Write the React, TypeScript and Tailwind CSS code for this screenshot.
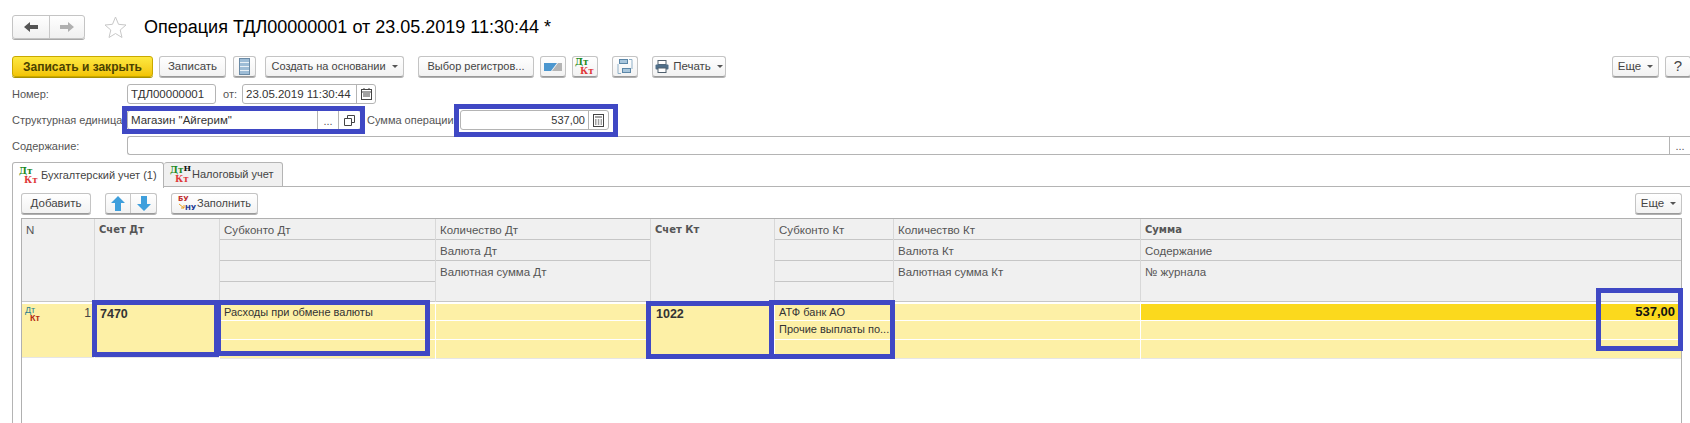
import React from 'react';

const btn =
  'flex items-center justify-center h-[21px] rounded-[3px] border border-[#c4c4c4] border-b-[#9a9a9a] bg-gradient-to-b from-white to-[#f2f2f2] shadow-[0_1px_0_#b0b0b0] text-[11.5px] text-[#444444] whitespace-nowrap';

const Caret = () => <span className="ml-[6px] w-0 h-0 border-x-[3px] border-x-transparent border-t-[3px] border-t-[#555555]" />;

// маленький значок Дт/Кт
const DtKt = ({ extra }: { extra?: string }) => (
  <span className="inline-flex flex-col shrink-0 w-[20px] font-bold text-[9px] leading-[9px] font-['DejaVu_Serif',serif]">
    <span className="text-[#1c8a1c]">
      Дт{extra && <span className="text-[#111111] text-[8px] relative -top-[2px]">{extra}</span>}
    </span>
    <span className="text-[#e0393a] ml-[5px]">Кт</span>
  </span>
);

const Field = ({ className, children }: { className: string; children?: React.ReactNode }) => (
  <div className={`flex items-stretch rounded-[3px] border border-[#b4b4b4] bg-white text-[11.5px] text-[#333333] whitespace-nowrap ${className}`}>{children}</div>
);

const Label = ({ className, children }: { className: string; children: React.ReactNode }) => (
  <span className={`pt-[1px] text-[11px] text-[#555555] whitespace-nowrap ${className}`}>{children}</span>
);

const Dots = () => (
  <span className="w-[21px] border-l border-[#b4b4b4] flex items-end justify-center pb-[1px] text-[11px] leading-[14px] text-[#555555]">...</span>
);

const Arrow = ({ dir, color }: { dir: 'left' | 'right'; color: string }) => (
  <svg width="14" height="10" viewBox="0 0 14 10">
    <path d={dir === 'left' ? 'M0 5 L6 0 V3 H14 V7 H6 V10 Z' : 'M14 5 L8 0 V3 H0 V7 H8 V10 Z'} fill={color} />
  </svg>
);

const BlueArrow = ({ up }: { up?: boolean }) => (
  <svg width="14" height="15" viewBox="0 0 14 15">
    <path d={up ? 'M7 0 L14 7 H10 V15 H4 V7 H0 Z' : 'M7 15 L14 8 H10 V0 H4 V8 H0 Z'} fill="#3f9fdc" />
  </svg>
);

const Box = ({ className }: { className: string }) => (
  <div className={`absolute border-[5px] border-[#3f48c4] pointer-events-none ${className}`} />
);

const HeadCell = ({ className, bold, children }: { className: string; bold?: boolean; children?: React.ReactNode }) => (
  <div
    className={`bg-[#f0f0f0] border-b border-[#c6c6c6] px-[4px] pt-[3px] text-[#555555] whitespace-nowrap overflow-hidden ${bold ? "font-['DejaVu_Sans',sans-serif] font-bold text-[10px] leading-[15px]" : 'text-[11.5px]'} ${className}`}
  >
    {children}
  </div>
);

type Col = {
  width: string;
  head: string[];
  heights: string[];
  bold?: boolean;
  rows: string[];
};

const columns: Col[] = [
  { width: 'w-[72px]', head: ['N'], heights: ['h-[83px]'], rows: [''] },
  { width: 'w-[125px]', head: ['Счет Дт'], heights: ['h-[83px]'], bold: true, rows: ['7470'] },
  { width: 'w-[216px]', head: ['Субконто Дт', '', '', ''], heights: ['h-[21px]', 'h-[21px]', 'h-[21px]', 'h-[20px]'], rows: ['Расходы при обмене валюты', '', ''] },
  { width: 'w-[215px]', head: ['Количество Дт', 'Валюта Дт', 'Валютная сумма Дт'], heights: ['h-[21px]', 'h-[21px]', 'h-[41px]'], rows: ['', '', ''] },
  { width: 'w-[124px]', head: ['Счет Кт'], heights: ['h-[83px]'], bold: true, rows: ['1022'] },
  { width: 'w-[119px]', head: ['Субконто Кт', '', '', ''], heights: ['h-[21px]', 'h-[21px]', 'h-[21px]', 'h-[20px]'], rows: ['АТФ банк АО', 'Прочие выплаты по...', ''] },
  { width: 'w-[247px]', head: ['Количество Кт', 'Валюта Кт', 'Валютная сумма Кт'], heights: ['h-[21px]', 'h-[21px]', 'h-[41px]'], rows: ['', '', ''] },
  { width: 'w-[541px]', head: ['Сумма', 'Содержание', '№ журнала'], heights: ['h-[21px]', 'h-[21px]', 'h-[41px]'], rows: [] },
];

export default function App() {
  return (
    <div className="relative w-[1690px] h-[423px] overflow-hidden bg-white font-['Liberation_Sans',sans-serif]">
      {/* шапка */}
      <div className="flex items-center h-[34px] pt-[10px] pl-[12px] box-content">
        <div className="flex h-[24px] w-[73px] rounded-[3px] border border-[#c4c4c4] bg-gradient-to-b from-white to-[#f0f0f0] shadow-[0_1px_0_#a8a8a8]">
          <span className="w-[37px] flex items-center justify-center border-r border-[#c8c8c8]"><Arrow dir="left" color="#555555" /></span>
          <span className="flex-1 flex items-center justify-center"><Arrow dir="right" color="#b0b0b0" /></span>
        </div>
        <svg className="ml-[19px]" width="23" height="22" viewBox="0 0 23 22">
          <path d="M11.5 1 L14.5 8.3 L22 9 L16.2 14 L18 21.5 L11.5 17.5 L5 21.5 L6.8 14 L1 9 L8.5 8.3 Z" fill="none" stroke="#c8c8c8" />
        </svg>
        <span className="ml-[17px] text-[18px] text-black whitespace-nowrap">Операция ТДЛ00000001 от 23.05.2019 11:30:44 *</span>
      </div>

      {/* панель команд */}
      <div className="flex items-center mt-[12px] pl-[12px] pr-0">
        <div className="flex items-center justify-center w-[141px] h-[21px] rounded-[3px] border border-[#c9a900] bg-gradient-to-b from-[#fde93e] to-[#f3c400] shadow-[0_1px_0_#a89000] text-[12px] font-bold text-[#4a4200] whitespace-nowrap">
          Записать и закрыть
        </div>
        <div className={`${btn} w-[67px] ml-[6px]`}>Записать</div>
        <div className={`${btn} w-[23px] ml-[7px]`}>
          <svg width="11" height="17" viewBox="0 0 11 17">
            <rect x="0.5" y="0.5" width="10" height="16" fill="#9dbcd6" stroke="#6b8ba6" />
            <path d="M1 4.5 H10 M1 8.5 H10 M1 12.5 H10" stroke="#e8f0f6" />
          </svg>
        </div>
        <div className={`${btn} w-[139px] ml-[9px] text-[11px]`}>Создать на основании<Caret /></div>
        <div className={`${btn} w-[116px] ml-[14px] text-[11px]`}>Выбор регистров...</div>
        <div className={`${btn} w-[26px] ml-[6px]`}>
          <svg width="18" height="8" viewBox="0 0 18 8">
            <path d="M0 0 H13 L7 8 H0 Z" fill="#4c97cf" />
            <path d="M14 0 H18 V8 H8 Z" fill="#b4b4b4" />
          </svg>
        </div>
        <div className={`${btn} w-[26px] ml-[6px]`}><DtKt /></div>
        <div className={`${btn} w-[26px] ml-[14px]`}>
          <svg width="16" height="17" viewBox="0 0 16 17">
            <rect x="2.5" y="1.5" width="8" height="4" fill="#a9c6dc" stroke="#5c87a8" />
            <rect x="5.5" y="10.5" width="8" height="4" fill="#a9c6dc" stroke="#5c87a8" />
            <path d="M1 6 V15.5 H4 M15 11 V1.5 H12" fill="none" stroke="#8fb0c8" />
          </svg>
        </div>
        <div className={`${btn} w-[74px] ml-[14px]`}>
          <svg className="mr-[4px]" width="14" height="13" viewBox="0 0 14 13">
            <rect x="3" y="0.5" width="8" height="4" fill="#fff" stroke="#50606e" />
            <rect x="0.5" y="4.5" width="13" height="5" rx="1" fill="#4f6f8a" />
            <rect x="3" y="8" width="8" height="4.5" fill="#fff" stroke="#50606e" />
          </svg>
          Печать<Caret />
        </div>
        <div className={`${btn} w-[47px] ml-auto`}>Еще<Caret /></div>
        <div className={`${btn} w-[26px] ml-[6px] -mr-[1px] text-[15px] text-[#222222]`}>?</div>
      </div>

      {/* реквизиты */}
      <div className="flex items-center h-[20px] mt-[7px] pl-[12px]">
        <Label className="w-[115px]">Номер:</Label>
        <Field className="w-[89px] h-[20px] items-center pl-[3px] leading-[18px]">ТДЛ00000001</Field>
        <Label className="ml-[7px] w-[19px]">от:</Label>
        <Field className="w-[134px] h-[20px] leading-[18px]">
          <span className="w-[113px] pl-[3px]">23.05.2019 11:30:44</span>
          <span className="flex-1 border-l border-[#b4b4b4] flex items-center justify-center">
            <svg width="11" height="12" viewBox="0 0 11 12">
              <rect x="0.5" y="1.5" width="10" height="10" fill="none" stroke="#444444" />
              <path d="M0 4 H11 M3 0 V2 M8 0 V2 M2 6 H9 M2 8 H9" stroke="#444444" />
            </svg>
          </span>
        </Field>
      </div>
      <div className="flex items-center h-[20px] mt-[6px] pl-[12px]">
        <Label className="w-[115px]">Структурная единица:</Label>
        <Field className="w-[234px] h-[20px] leading-[18px]">
          <span className="flex-1 pl-[3px]">Магазин "Айгерим"</span>
          <Dots />
          <span className="w-[22px] border-l border-[#b4b4b4] flex items-center justify-center">
            <svg width="11" height="11" viewBox="0 0 11 11">
              <path d="M3.5 3 V0.5 H10.5 V7.5 H7.5 M0.5 3.5 H7.5 V10.5 H0.5 Z" fill="none" stroke="#444444" />
            </svg>
          </span>
        </Field>
        <Label className="ml-[6px] w-[93px]">Сумма операции:</Label>
        <Field className="w-[149px] h-[20px] leading-[18px]">
          <span className="flex-1 text-right pr-[3px] text-[11px]">537,00</span>
          <span className="w-[20px] border-l border-[#b4b4b4] flex items-center justify-center">
            <svg width="11" height="13" viewBox="0 0 11 13">
              <rect x="0.5" y="0.5" width="10" height="12" fill="none" stroke="#444444" />
              <path d="M2 3 H9 M2 6 H3.5 M4.8 6 H6.3 M7.6 6 H9 M2 8 H3.5 M4.8 8 H6.3 M7.6 8 H9 M2 10 H3.5 M4.8 10 H6.3 M7.6 10 H9" stroke="#444444" />
            </svg>
          </span>
        </Field>
      </div>
      <div className="flex items-center h-[19px] mt-[6px] pl-[12px]">
        <Label className="w-[115px]">Содержание:</Label>
        <Field className="flex-1 h-[19px] justify-end rounded-r-none border-r-0 leading-[16px]"><Dots /></Field>
      </div>

      {/* закладки */}
      <div className="flex h-[26px] mt-[7px] pl-[12px]">
        <div className="relative z-10 flex items-center w-[152px] h-[26px] pl-[6px] rounded-t-[3px] border border-b-0 border-[#b4b4b4] bg-white text-[11px] text-[#444444] whitespace-nowrap">
          <DtKt />
          <span className="ml-[2px]">Бухгалтерский учет (1)</span>
        </div>
        <div className="flex items-center w-[119px] h-[25px] pl-[6px] rounded-t-[3px] border border-l-0 border-[#b4b4b4] bg-[#f0f0f0] text-[11px] text-[#444444] whitespace-nowrap">
          <DtKt extra="Н" />
          <span className="ml-[2px]">Налоговый учет</span>
        </div>
        <div className="flex-1 h-[25px] border-b border-[#b4b4b4]" />
      </div>

      {/* содержимое закладки */}
      <div className="ml-[12px] -mt-[1px] h-[237px] border-l border-[#b4b4b4] pl-[8px] pt-[6px]">
        <div className="flex items-center w-[1661px]">
          <div className={`${btn} w-[70px]`}>Добавить</div>
          <div className={`${btn} w-[52px] ml-[14px]`}>
            <span className="w-[25px] h-full flex items-center justify-center border-r border-[#c8c8c8]"><BlueArrow up /></span>
            <span className="flex-1 flex items-center justify-center"><BlueArrow /></span>
          </div>
          <div className={`${btn} w-[87px] ml-[14px] text-[11px]`}>
            <span className="relative w-[18px] h-[16px] mr-[1px] font-bold text-[7px] leading-[7px] font-['DejaVu_Sans',sans-serif]">
              <span className="absolute left-0 top-0 text-[#c03030]">БУ</span>
              <span className="absolute left-[7px] bottom-0 text-[#1f3a94]">НУ</span>
              <svg className="absolute left-[1px] top-[7px]" width="7" height="7" viewBox="0 0 7 7">
                <path d="M0 1 L5 5 M5 2 V5 H2" fill="none" stroke="#e8a020" />
              </svg>
            </span>
            Заполнить
          </div>
          <div className={`${btn} w-[47px] ml-auto`}>Еще<Caret /></div>
        </div>

        {/* таблица проводок */}
        <div className="flex items-start mt-[4px] w-[1661px] h-[205px] border-x border-t border-[#b0b0b0] text-[11px]">
          {columns.map((col, i) => (
            <div key={i} className={`flex flex-col shrink-0 ${col.width}`}>
              <div className={`flex flex-col ${i > 0 ? 'border-l border-[#d8d8d8]' : ''}`}>
                {col.head.map((h, j) => (
                  <HeadCell key={j} className={col.heights[j]} bold={col.bold || (i === 7 && j === 0)}>{h}</HeadCell>
                ))}
              </div>
              <div className="h-[2px] bg-white" />
              <div className={`flex flex-col ${i > 0 ? 'border-l border-white' : ''}`}>
                {i === 0 && (
                  <div className="flex items-start justify-between h-[54px] bg-[#fdf0a6] pl-[3px] pr-[3px] pt-[2px] border-b border-[#e6e6e6]">
                    <span className="inline-flex flex-col w-[18px] text-[9px] leading-[8px]">
                      <span className="text-[#2a7f8f]">Дт</span>
                      <span className="ml-[5px] font-bold text-[#b52a10]">Кт</span>
                    </span>
                    <span className="text-[12px] leading-[14px] text-[#444444]">1</span>
                  </div>
                )}
                {col.bold && (
                  <div className="h-[54px] bg-[#fdf0a6] px-[5px] pt-[1px] border-b border-[#e6e6e6] text-[12.5px] font-bold text-[#333333]">{col.rows[0]}</div>
                )}
                {col.rows.length === 3 &&
                  col.rows.map((r, j) => (
                    <div
                      key={j}
                      className={`bg-[#fdf0a6] px-[4px] text-[11px] leading-[17px] text-[#333333] whitespace-nowrap overflow-hidden ${j === 2 ? 'h-[19px] border-b border-[#e6e6e6]' : j === 1 ? 'h-[19px] border-b border-white' : 'h-[17px] border-b border-white'}`}
                    >
                      {r}
                    </div>
                  ))}
                {i === 7 && (
                  <>
                    <div className="h-[17px] bg-[#fbd91d] border-b border-white pr-[6px] text-right text-[13px] leading-[16px] font-bold text-[#111111]">537,00</div>
                    <div className="h-[19px] bg-[#fdf0a6] border-b border-white" />
                    <div className="h-[19px] bg-[#fdf0a6] border-b border-[#e6e6e6]" />
                  </>
                )}
              </div>
            </div>
          ))}
        </div>
      </div>

      {/* синие рамки поверх формы */}
      <Box className="left-[122px] top-[106px] w-[243px] h-[28px]" />
      <Box className="left-[454px] top-[104px] w-[164px] h-[33px]" />
      <Box className="left-[92px] top-[300px] w-[127px] h-[57px]" />
      <Box className="left-[216px] top-[300px] w-[214px] h-[56px]" />
      <Box className="left-[646px] top-[301px] w-[128px] h-[58px]" />
      <Box className="left-[769px] top-[300px] w-[126px] h-[59px]" />
      <Box className="left-[1596px] top-[288px] w-[87px] h-[63px]" />
    </div>
  );
}
